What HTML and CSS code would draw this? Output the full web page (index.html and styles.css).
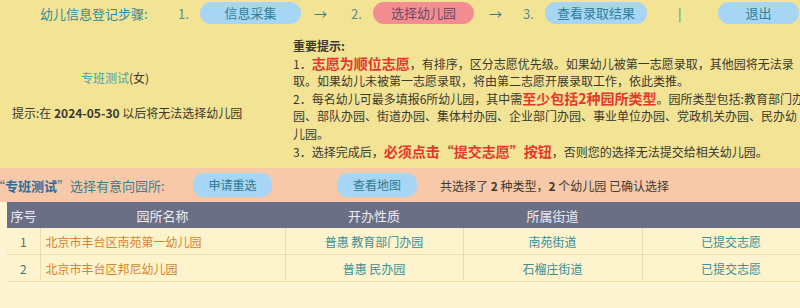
FILE: index.html
```html
<!DOCTYPE html>
<html lang="zh-CN">
<head>
<meta charset="utf-8">
<title>幼儿信息登记</title>
<link rel="stylesheet" href="styles.css">
</head>
<body>
<div class="page">
  <div class="top">
    <nav class="nav">
      <span class="nav-label">幼儿信息登记步骤:</span>
      <span class="nav-num">1.</span>
      <span class="nav-btn blue w101">信息采集</span>
      <span class="nav-arrow a1">→</span>
      <span class="nav-num">2.</span>
      <span class="nav-btn red w101">选择幼儿园</span>
      <span class="nav-arrow a2">→</span>
      <span class="nav-num">3.</span>
      <span class="nav-btn blue w102">查看录取结果</span>
      <span class="nav-sep">|</span>
      <span class="nav-btn blue w81">退出</span>
    </nav>
    <div class="info">
      <div class="info-left">
        <div class="child"><span class="child-name">专班测试</span>(女)</div>
        <div class="deadline">提示:在 <b>2024-05-30</b> 以后将无法选择幼儿园</div>
      </div>
      <div class="info-right">
        <div class="tips-title">重要提示:</div>
        <div>1．<b class="hl">志愿为顺位志愿</b>，有排序，区分志愿优先级。如果幼儿被第一志愿录取，其他园将无法录<br>取。如果幼儿未被第一志愿录取，将由第二志愿开展录取工作，依此类推。</div>
        <div>2．每名幼儿可最多填报6所幼儿园，其中需<b class="hl">至少包括2种园所类型</b>。园所类型包括:教育部门办<br>园、部队办园、街道办园、集体村办园、企业部门办园、事业单位办园、党政机关办园、民办幼<br>儿园。</div>
        <div>3．选择完成后，<b class="hl">必须点击“提交志愿”按钮</b>，否则您的选择无法提交给相关幼儿园。</div>
      </div>
    </div>
  </div>
  <div class="choose">
    <span class="choose-label">“<b class="choose-name">专班测试</b>”选择有意向园所:</span>
    <span class="sub-btn">申请重选</span>
    <span class="sub-btn map">查看地图</span>
    <span class="summary">共选择了 <b>2</b> 种类型，<b>2</b> 个幼儿园 已确认选择</span>
  </div>
  <table class="list">
    <colgroup>
      <col class="c1"><col class="c2"><col class="c3"><col class="c4"><col class="c5">
    </colgroup>
    <thead>
      <tr><th>序号</th><th>园所名称</th><th>开办性质</th><th>所属街道</th><th></th></tr>
    </thead>
    <tbody>
      <tr><td>1</td><td class="name">北京市丰台区南苑第一幼儿园</td><td class="teal">普惠 教育部门办园</td><td class="teal">南苑街道</td><td class="teal">已提交志愿</td></tr>
      <tr><td>2</td><td class="name">北京市丰台区邦尼幼儿园</td><td class="teal">普惠 民办园</td><td class="teal">石榴庄街道</td><td class="teal">已提交志愿</td></tr>
    </tbody>
  </table>
</div>
</body>
</html>
```
FILE: styles.css
```css
html, body {
  margin: 0;
  padding: 0;
  background: #fdf4d2;
  overflow: hidden;
}
body {
  font-family: "Noto Sans CJK SC", "Noto Sans", sans-serif;
  font-size: 12px;
  color: #3b3a30;
}
.page {
  width: 820px;
}
.top {
  background: #f3e394;
  height: 168px;
}
.nav {
  display: flex;
  align-items: center;
  height: 26px;
  font-size: 13px;
  color: #2f8c9c;
}
.nav-label {
  margin-left: 40px;
  width: 138px;
}
.nav-num {
  width: 22px;
  color: #5b8c92;
}
.nav-num:first-of-type { width: 21px; }
.nav-btn {
  height: 22px;
  line-height: 22px;
  border-radius: 11px;
  text-align: center;
  color: #2f8096;
}
.blue { background: #a7d6f4; }
.red { background: #f48d8f; color: #6d4a6a; }
.w101 { width: 101px; }
.w102 { width: 102px; }
.w81 { width: 81px; }
.nav-arrow {
  box-sizing: border-box;
  color: #3a7d8a;
}
.a1 { width: 50px; padding-left: 13px; }
.a2 { width: 49px; padding-left: 15px; }
.nav-sep {
  box-sizing: border-box;
  width: 71px;
  padding-left: 31px;
  color: #4a8a92;
}
.info {
  display: flex;
  padding-top: 11px;
}
.info-left {
  width: 293px;
  flex: none;
}
.child {
  width: 230px;
  text-align: center;
  margin-top: 32px;
  line-height: 18px;
}
.child-name { color: #47a4b4; }
.deadline {
  margin-top: 17px;
  padding-left: 12px;
  line-height: 18px;
}
.deadline b { font-weight: 700; }
.info-right {
  line-height: 17.6px;
  white-space: nowrap;
  color: #3b3a30;
}
.tips-title { font-weight: 700; }
.hl {
  color: #e4382e;
  font-size: 14px;
  font-weight: 700;
  line-height: 0;
}
.choose {
  background: #f7c9a8;
  height: 34px;
  display: flex;
  align-items: center;
}
.choose-label {
  margin-left: -8px;
  width: 201px;
  font-size: 13px;
  color: #3e7f8c;
}
.choose-name { color: #2a6fa0; font-weight: 700; }
.sub-btn {
  width: 79px;
  height: 24px;
  line-height: 24px;
  border-radius: 10px;
  background: #a7d6f4;
  text-align: center;
  font-size: 12px;
  color: #2f7a92;
}
.sub-btn.map {
  margin-left: 65px;
  width: 80px;
}
.summary {
  margin-left: 23px;
  color: #3e3a33;
}
.list {
  margin-left: 7px;
  width: 813px;
  border-collapse: collapse;
  table-layout: fixed;
}
.c1 { width: 33px; }
.c2 { width: 245px; }
.c3 { width: 178px; }
.c4 { width: 179px; }
.c5 { width: 178px; }
.list th {
  background: #6b6f86;
  color: #eceaf2;
  font-weight: 400;
  font-size: 13px;
  height: 26px;
  padding: 0;
}
.list td {
  background: #fdf3cd;
  height: 26px;
  padding: 0;
  text-align: center;
  border-right: 1px solid #eddcae;
  border-bottom: 1px solid #eddcae;
  color: #4f6f73;
  font-size: 12px;
}
.list td.name {
  text-align: left;
  padding-left: 5px;
  color: #d6842e;
}
.list td.teal { color: #3a8f9a; }
```
